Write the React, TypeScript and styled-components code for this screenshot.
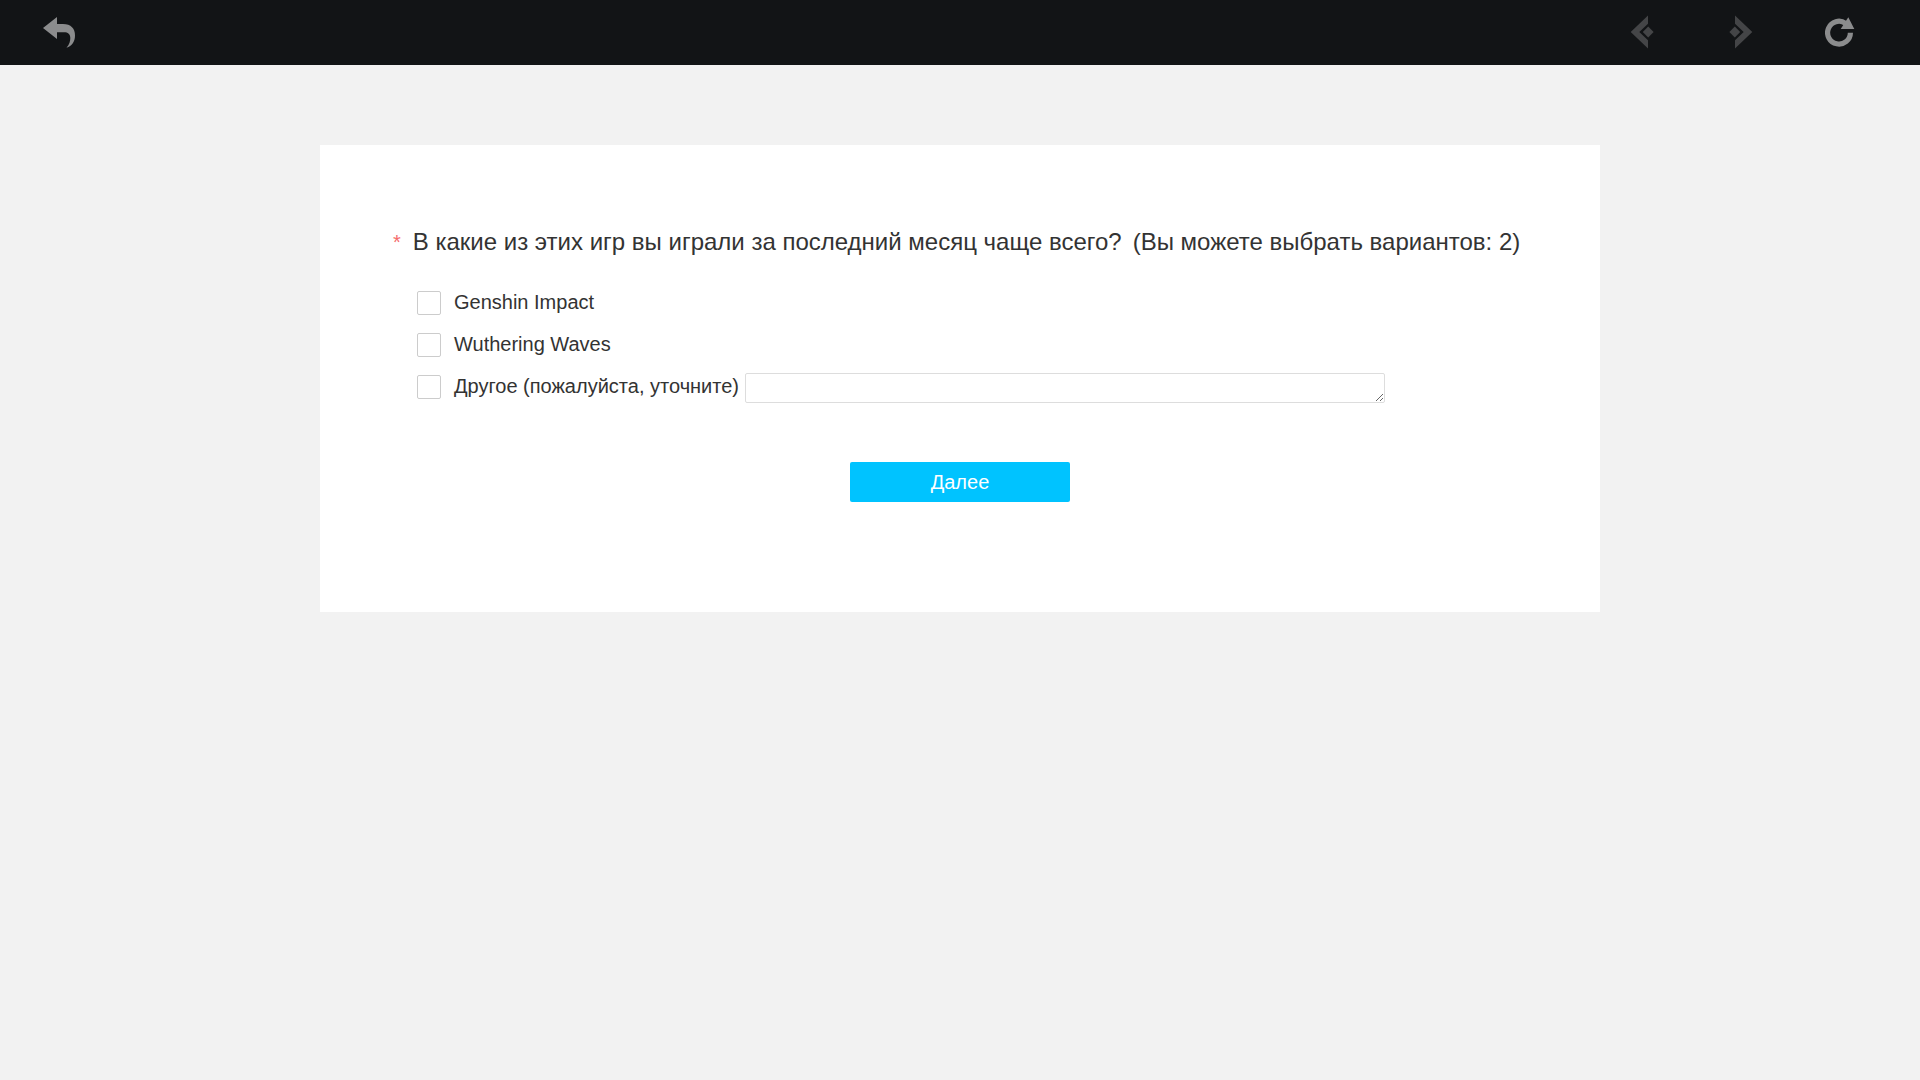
import React, { useState } from "react";
import styled, { createGlobalStyle } from "styled-components";

const GlobalStyle = createGlobalStyle`
  *, *::before, *::after { box-sizing: border-box; }
  body {
    margin: 0;
    background: #f2f2f2;
    color: #333;
    font-family: "Liberation Sans", Arial, sans-serif;
  }
`;

const TopBar = styled.header`
  display: flex;
  justify-content: space-between;
  height: 65px;
  padding: 0 50px 0 29px;
  background: #121416;
`;

const NavGroup = styled.nav`
  display: flex;
  gap: 39px;
`;

const IconButton = styled.button`
  display: flex;
  align-items: center;
  justify-content: center;
  width: 60px;
  height: 100%;
  padding: 0 0 1px;
  border: 0;
  background: transparent;
  color: #8b8c8d;
  cursor: pointer;

  &:disabled {
    color: #444547;
    cursor: default;
  }
`;

const Main = styled.main`
  padding: 80px 20px;
`;

const Card = styled.form`
  max-width: 1280px;
  margin: 0 auto;
  padding: 80px 72px 110px;
  background: #fff;
`;

const Question = styled.fieldset`
  min-width: 0;
  margin: 0;
  padding: 0;
  border: 0;
`;

const Title = styled.legend`
  display: flex;
  gap: 12px;
  padding: 0 0 0 1px;
  font-size: 24px;
  line-height: 34px;
`;

const Required = styled.span`
  color: #f56c6c;
  font-size: 20px;
`;

const Hint = styled.span`
  margin-left: 11px;
`;

const Options = styled.ul`
  margin: 0;
  padding: 23px 0 0 25px;
  list-style: none;
`;

const Option = styled.li`
  display: flex;
  align-items: center;
  gap: 6px;
  height: 42px;
`;

const OptionLabel = styled.label`
  display: flex;
  align-items: center;
  gap: 13px;
  font-size: 20px;
  line-height: 24px;
  white-space: nowrap;
  cursor: pointer;
`;

const OptionText = styled.span`
  padding-bottom: 2px;
`;

const Checkbox = styled.input`
  appearance: none;
  width: 24px;
  height: 24px;
  margin: 0;
  border: 1px solid #ccc;
  border-radius: 2px;
  background: #fff;
  cursor: pointer;

  &:checked {
    border-color: #00c3ff;
    background: #00c3ff;
  }
`;

const OtherText = styled.textarea`
  flex: 0 1 640px;
  min-width: 0;
  height: 30px;
  margin: 2px 0 0;
  padding: 2px 8px;
  border: 1px solid #ddd;
  border-radius: 2px;
  background: #fff;
  color: inherit;
  font: inherit;
  line-height: 24px;
  resize: both;
  overflow: auto;
`;

const Actions = styled.div`
  display: flex;
  justify-content: center;
  padding-top: 54px;
`;

const NextButton = styled.button`
  width: 220px;
  height: 40px;
  padding: 0;
  border: 0;
  border-radius: 2px;
  background: #00c3ff;
  color: #fff;
  font-family: inherit;
  font-size: 20px;
  line-height: 24px;
  cursor: pointer;
`;

const BackIcon = () => (
  <svg width="32" height="32" viewBox="0 0 32 32" fill="currentColor" aria-hidden="true">
    <path d="M0 12 14 1v7h6c8 0 12 4.500 12 11.500 0 6-3 10.500-8.500 12.200C26.500 28.500 27.300 25 27.300 22c0-4-2.300-5.800-6.300-5.800h-7V23Z" />
  </svg>
);

const ChevronIcon = ({ flipped = false }: { flipped?: boolean }) => (
  <svg width="24" height="34" viewBox="0 0 24 34" fill="currentColor" aria-hidden="true">
    <g transform={flipped ? "matrix(-1 0 0 1 24 0)" : undefined}>
      <path d="M.7 17 18 .5v8.300L9.300 17l8.700 8.200v8.300Z" />
      <path d="m18.200 11.600 5.400 5.400-5.400 5.400-5.400-5.400Z" />
    </g>
  </svg>
);

const RefreshIcon = () => (
  <svg width="30" height="30" viewBox="0 0 30 30" aria-hidden="true">
    <path
      d="M25.400 15.700A11.400 11.400 0 1 1 20.500 6.300"
      fill="none"
      stroke="currentColor"
      strokeWidth="5.200"
    />
    <path d="m23.300.3 6 11.700H15.700Z" fill="currentColor" />
  </svg>
);

const games = ["Genshin Impact", "Wuthering Waves"];

export default function App() {
  const [other, setOther] = useState("");

  return (
    <>
      <GlobalStyle />
      <TopBar>
        <IconButton type="button" aria-label="Назад">
          <BackIcon />
        </IconButton>
        <NavGroup>
          <IconButton type="button" aria-label="Предыдущая страница" disabled>
            <ChevronIcon />
          </IconButton>
          <IconButton type="button" aria-label="Следующая страница" disabled>
            <ChevronIcon flipped />
          </IconButton>
          <IconButton type="button" aria-label="Обновить">
            <RefreshIcon />
          </IconButton>
        </NavGroup>
      </TopBar>
      <Main>
        <Card onSubmit={(event) => event.preventDefault()}>
          <Question>
            <Title>
              <Required>*</Required>
              <span>
                В какие из этих игр вы играли за последний месяц чаще всего?
                <Hint>(Вы можете выбрать вариантов: 2)</Hint>
              </span>
            </Title>
            <Options>
              {games.map((game) => (
                <Option key={game}>
                  <OptionLabel>
                    <Checkbox type="checkbox" name="games" value={game} />
                    <OptionText>{game}</OptionText>
                  </OptionLabel>
                </Option>
              ))}
              <Option>
                <OptionLabel>
                  <Checkbox type="checkbox" name="games" value="other" />
                  <OptionText>Другое (пожалуйста, уточните)</OptionText>
                </OptionLabel>
                <OtherText
                  aria-label="Другое"
                  rows={1}
                  value={other}
                  onChange={(event) => setOther(event.target.value)}
                />
              </Option>
            </Options>
          </Question>
          <Actions>
            <NextButton type="submit">Далее</NextButton>
          </Actions>
        </Card>
      </Main>
    </>
  );
}
